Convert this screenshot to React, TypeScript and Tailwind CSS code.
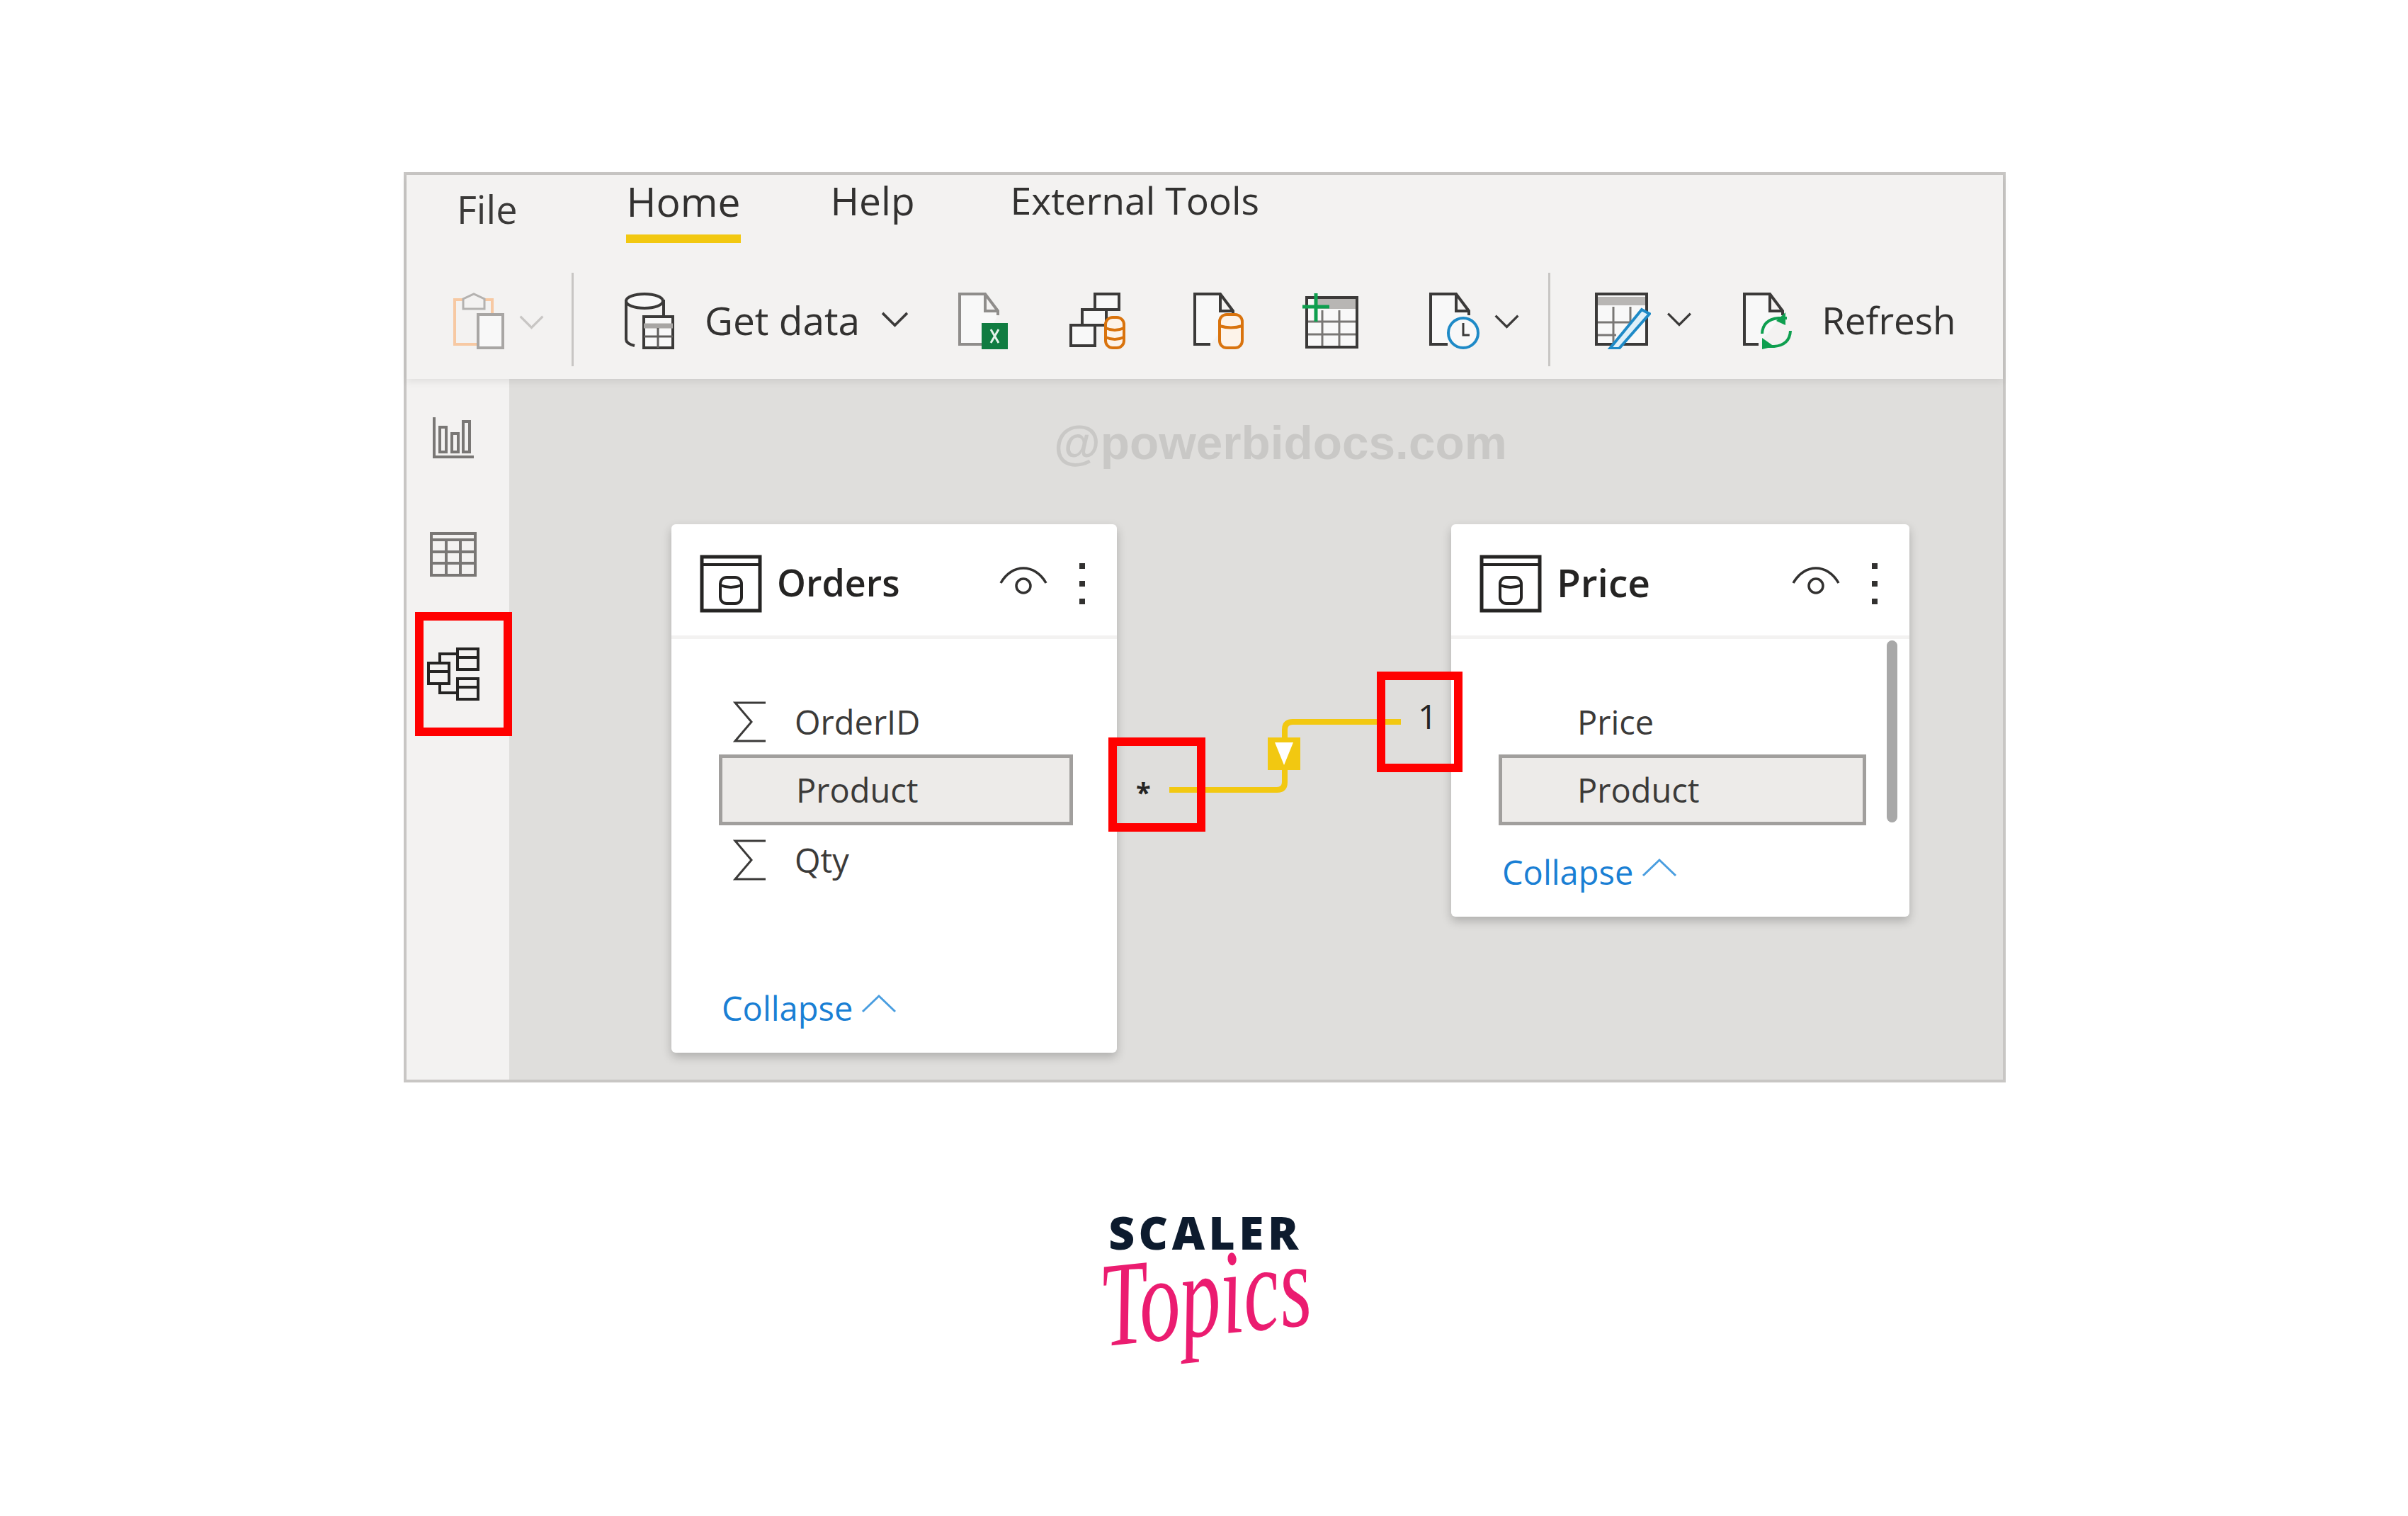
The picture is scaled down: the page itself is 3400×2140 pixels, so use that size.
import React from "react";

const DARK = "#3b3a39";
const ORANGE = "#d9730d";
const BLUE = "#1e8ac7";
const GREEN = "#0e9f4f";

const Chevron = ({ faded = false, className = "" }: { faded?: boolean; className?: string }) => (
  <svg viewBox="0 0 42 24" className={className} fill="none" stroke={faded ? "#c8c6c4" : DARK} strokeWidth="4">
    <path d="M2 2 L21 21 L40 2" />
  </svg>
);

const ClipboardIcon = () => (
  <svg width="72" height="80" viewBox="0 0 72 80" fill="none">
    <path d="M34 73 H2 V10 H55 V30" stroke="#f7c9a3" strokeWidth="4" />
    <path d="M14 23 V9 L29 2 L44 9 V23 Z" stroke="#b4b2b0" strokeWidth="3" fill="#f3f2f1" />
    <rect x="35" y="31" width="35" height="47" stroke="#a8a6a4" strokeWidth="4" fill="#f8f8f8" />
  </svg>
);

const GetDataIcon = () => (
  <svg width="70" height="80" viewBox="0 0 70 80" fill="none" stroke={DARK}>
    <path d="M2 10 V66 Q2 72 14 75 M55 10 V32" strokeWidth="4" />
    <ellipse cx="28" cy="12" rx="26" ry="10" strokeWidth="4" fill="#f8f8f8" />
    <rect x="27" y="34" width="41" height="44" strokeWidth="4" fill="#f8f8f8" />
    <path d="M27 47 H68" stroke="#a8a6a4" strokeWidth="7" />
    <path d="M27 62 H68 M47 50 V78" strokeWidth="3" stroke="#605e5c" />
  </svg>
);

const DocShape = ({ stroke = DARK, bottom = 24 }: { stroke?: string; bottom?: number }) => (
  <path
    d={`M${bottom} 73 H2 V2 H38 L56 26 V32 M38 2 V26 H56`}
    stroke={stroke}
    strokeWidth="4"
    fill="#f8f8f8"
  />
);

const ExcelIcon = () => (
  <svg width="70" height="80" viewBox="0 0 70 80" fill="none">
    <DocShape stroke="#8f8d8b" bottom={34} />
    <rect x="33" y="43" width="37" height="37" fill="#107c41" />
    <path d="M46 52 L57 71 M57 52 L46 71" stroke="#e4f3ea" strokeWidth="3" />
  </svg>
);

const BoxesIcon = () => (
  <svg width="79" height="80" viewBox="0 0 79 80" fill="none">
    <rect x="36" y="2" width="34" height="22" stroke={DARK} strokeWidth="4" fill="#f8f8f8" />
    <rect x="18" y="24" width="34" height="22" stroke={DARK} strokeWidth="4" fill="#f8f8f8" />
    <rect x="2" y="46" width="34" height="29" stroke={DARK} strokeWidth="4" fill="#f8f8f8" />
    <rect x="51" y="35" width="26" height="43" rx="10" stroke={ORANGE} strokeWidth="4" fill="#fdf3e9" />
    <path d="M51 50 Q64 56 77 50 M51 63 Q64 69 77 63" stroke={ORANGE} strokeWidth="4" />
  </svg>
);

const DocCylinderIcon = () => (
  <svg width="71" height="80" viewBox="0 0 71 80" fill="none">
    <DocShape />
    <rect x="37" y="31" width="32" height="47" rx="10" stroke={ORANGE} strokeWidth="4" fill="#fdf3e9" />
    <path d="M37 47 Q53 52 69 47" stroke={ORANGE} strokeWidth="4" />
  </svg>
);

const TablePlusIcon = () => (
  <svg width="79" height="78" viewBox="0 0 79 78" fill="none">
    <rect x="6" y="6" width="71" height="70" stroke={DARK} strokeWidth="4" fill="#f8f8f8" />
    <rect x="20" y="8" width="55" height="14" fill="#b8b6b4" />
    <path d="M8 40 H75 M8 58 H75 M28 24 V74 M52 24 V74" stroke="#797775" strokeWidth="3" />
    <path d="M19 0 V40 M0 19 H38" stroke={GREEN} strokeWidth="5" />
  </svg>
);

const DocClockIcon = () => (
  <svg width="71" height="80" viewBox="0 0 71 80" fill="none">
    <DocShape bottom={26} />
    <ellipse cx="48" cy="57" rx="21" ry="21" stroke={BLUE} strokeWidth="4" fill="#f8f8f8" />
    <path d="M48 43 V60 H57" stroke={DARK} strokeWidth="3" />
  </svg>
);

const TableEditIcon = () => (
  <svg width="79" height="80" viewBox="0 0 79 80" fill="none">
    <rect x="2" y="2" width="71" height="71" stroke={DARK} strokeWidth="4" fill="#f8f8f8" />
    <rect x="4" y="6" width="67" height="12" fill="#b8b6b4" />
    <path d="M4 42 H50 M4 60 H30 M26 20 V72 M50 20 V52" stroke="#797775" strokeWidth="3" />
    <path d="M21 79 L66 24 L77 30 L34 79 Z" stroke={BLUE} strokeWidth="4" fill="#dff0f9" />
  </svg>
);

const RefreshDocIcon = () => (
  <svg width="70" height="80" viewBox="0 0 70 80" fill="none">
    <DocShape bottom={22} />
    <path d="M27 58 Q28 38 50 36 L62 36" stroke={GREEN} strokeWidth="4" />
    <path d="M60 28 V46 L47 40 Z" fill={GREEN} />
    <path d="M67 54 Q66 74 44 76 L32 76" stroke={GREEN} strokeWidth="4" />
    <path d="M27 64 V80 L44 76 Z" fill={GREEN} />
  </svg>
);

const ChartIcon = () => (
  <svg width="58" height="58" viewBox="0 0 58 58" fill="none" stroke="#797775" strokeWidth="4">
    <path d="M2 0 V56 H58" />
    <rect x="10" y="14" width="9" height="35" />
    <rect x="27" y="23" width="9" height="26" />
    <rect x="43" y="6" width="9" height="43" />
  </svg>
);

const GridIcon = () => (
  <svg width="66" height="63" viewBox="0 0 66 63" fill="none" stroke="#797775" strokeWidth="4">
    <rect x="2" y="2" width="62" height="59" />
    <path d="M2 11 H64 M2 28 H64 M2 44 H64 M23 11 V61 M43 11 V61" />
  </svg>
);

const ModelIcon = () => (
  <svg width="74" height="75" viewBox="0 0 74 75" fill="none" stroke="#252423" strokeWidth="4">
    <rect x="2" y="22" width="29" height="29" />
    <path d="M2 34 H31" />
    <rect x="43" y="2" width="29" height="29" />
    <path d="M43 14 H72" />
    <rect x="43" y="44" width="29" height="29" />
    <path d="M43 56 H72" />
    <path d="M18 22 V9 H43 M18 51 V64 H43" />
  </svg>
);

const TableHeadIcon = () => (
  <svg width="88" height="82" viewBox="0 0 88 82" fill="none" stroke="#252423">
    <rect x="3" y="3" width="82" height="76" strokeWidth="5" />
    <path d="M3 14 H85" strokeWidth="4" />
    <rect x="29" y="32" width="30" height="37" rx="9" strokeWidth="4" />
    <path d="M29 43 Q44 49 59 43" strokeWidth="4" />
  </svg>
);

const EyeIcon = () => (
  <svg width="68" height="42" viewBox="0 0 68 42" fill="none" stroke="#323130" strokeWidth="3.5">
    <path d="M2 24 C18 -4 50 -4 66 24" />
    <circle cx="34" cy="28" r="10" />
  </svg>
);

const Dots = () => (
  <div className="flex flex-col gap-[17px]">
    <div className="w-[8px] h-[8px] bg-[#323130]" />
    <div className="w-[8px] h-[8px] bg-[#323130]" />
    <div className="w-[8px] h-[8px] bg-[#323130]" />
  </div>
);

const Sigma = () => (
  <svg width="46" height="58" viewBox="0 0 46 58" fill="none" stroke="#3b3a39" strokeWidth="3">
    <path d="M46 2 H3 L26 29 L3 56 H46" />
  </svg>
);

const Field = ({ name, className = "" }: { name: string; className?: string }) => (
  <div className={`h-[92px] flex items-center ${className}`}>
    <div className="w-[46px] ml-[87px] shrink-0">
      <Sigma />
    </div>
    <span className="ml-[41px] text-[47px] leading-none text-[#3b3a39]">{name}</span>
  </div>
);

const KeyField = ({ boxClass, textClass }: { boxClass: string; textClass: string }) => (
  <div className={`h-[100px] border-[5px] border-[#a19f9d] bg-[#edebe9] flex items-center ${boxClass}`}>
    <span className={`text-[47px] leading-none text-[#3b3a39] ${textClass}`}>Product</span>
  </div>
);

const Collapse = () => (
  <div className="flex items-center text-[#1a7fd4]">
    <span className="text-[47px] leading-none">Collapse</span>
    <svg width="50" height="27" viewBox="0 0 50 27" fill="none" stroke="#4a9ee0" strokeWidth="3" className="ml-[12px] mb-[14px]">
      <path d="M2 25 L25 3 L48 25" />
    </svg>
  </div>
);

const TableCard = ({
  title,
  titleClass,
  className,
  children,
}: {
  title: string;
  titleClass: string;
  className: string;
  children: React.ReactNode;
}) => (
  <div className={`absolute bg-white rounded-[6px] shadow-[0_6px_14px_rgba(0,0,0,0.22)] flex flex-col ${className}`}>
    <div className="h-[162px] shrink-0 border-b-[5px] border-[#f3f2f1] flex items-center pt-[10px] pl-[40px] pr-[45px]">
      <TableHeadIcon />
      <span className={`ml-[21px] mb-[4px] leading-none font-semibold text-[#252423] ${titleClass}`}>{title}</span>
      <div className="ml-auto mr-[45px] mb-[8px]">
        <EyeIcon />
      </div>
      <Dots />
    </div>
    {children}
  </div>
);

export default function App() {
  return (
    <div className="w-[3400px] h-[2140px] bg-white flex flex-col items-center font-['Open_Sans',sans-serif] overflow-hidden">
      <div className="mt-[243px] w-[2262px] h-[1285px] shrink-0 border-4 border-[#c8c6c4] flex flex-col ml-[2px]">
        {/* ribbon */}
        <div className="h-[288px] shrink-0 bg-[#f3f2f1] relative z-10 shadow-[0_4px_10px_rgba(0,0,0,0.08)] flex flex-col">
          <div className="h-[120px] flex items-start leading-none text-[#323130]">
            <span className="ml-[71px] mt-[21px] text-[54px] text-[#3b3a39]">File</span>
            <div className="ml-[154px] mt-[9px] flex flex-col">
              <span className="text-[57px] font-medium">Home</span>
              <div className="mt-[18px] h-[12px] bg-[#f2c811]" />
            </div>
            <span className="ml-[127px] mt-[8px] text-[55px]">Help</span>
            <span className="ml-[135px] mt-[9px] text-[53.5px]">External Tools</span>
          </div>
          <div className="h-[132px] mt-[18px] flex items-center">
            <div className="ml-[66px] flex items-center">
              <div className="mt-[4px]">
                <ClipboardIcon />
              </div>
              <Chevron faded className="w-[39px] h-[20px] ml-[19px] mt-[8px]" />
            </div>
            <div className="ml-[37px] w-[3px] h-[132px] bg-[#c8c6c4]" />
            <div className="ml-[72px] flex items-center">
              <div className="mt-[4px]">
                <GetDataIcon />
              </div>
              <span className="ml-[43px] text-[55px] leading-none text-[#323130]">Get data</span>
              <Chevron className="w-[43px] h-[22px] ml-[28px]" />
            </div>
            <div className="ml-[68px] mt-[4px]">
              <ExcelIcon />
            </div>
            <div className="ml-[87px] mt-[4px]">
              <BoxesIcon />
            </div>
            <div className="ml-[96px] mt-[4px]">
              <DocCylinderIcon />
            </div>
            <div className="ml-[83px] mt-[4px]">
              <TablePlusIcon />
            </div>
            <div className="ml-[100px] flex items-center">
              <div className="mt-[4px]">
                <DocClockIcon />
              </div>
              <Chevron className="w-[41px] h-[20px] ml-[18px] mt-[6px]" />
            </div>
            <div className="ml-[38px] w-[3px] h-[132px] bg-[#c8c6c4]" />
            <div className="ml-[63px] flex items-center">
              <div className="mt-[4px]">
                <TableEditIcon />
              </div>
              <Chevron className="w-[42px] h-[20px] ml-[19px]" />
            </div>
            <div className="ml-[69px] flex items-center">
              <div className="mt-[4px]">
                <RefreshDocIcon />
              </div>
              <span className="ml-[41px] text-[53px] leading-none text-[#323130]">Refresh</span>
            </div>
          </div>
        </div>

        <div className="flex-1 flex min-h-0">
          {/* view rail */}
          <div className="w-[145px] shrink-0 bg-[#f3f2f1] relative flex flex-col">
            <div className="mt-[54px] ml-[37px]">
              <ChartIcon />
            </div>
            <div className="mt-[104px] ml-[33px]">
              <GridIcon />
            </div>
            <div className="mt-[100px] ml-[29px]">
              <ModelIcon />
            </div>
            <div className="absolute z-20 left-[12px] top-[329px] w-[137px] h-[175px] border-[12px] border-[#ff0000]" />
          </div>

          {/* model canvas */}
          <div className="flex-1 relative bg-[#dfdedc]">
            <div className="absolute left-[769px] top-[49px] text-[67.5px] leading-[1.2] font-bold text-[#c9c8c6] font-['Liberation_Sans',sans-serif] whitespace-nowrap">
              @powerbidocs.com
            </div>

            <TableCard title="Orders" titleClass="text-[52px]" className="left-[229px] top-[205px] w-[629px] h-[746px]">
              <div className="pt-[71px] flex-1 flex flex-col">
                <Field name="OrderID" />
                <div className="ml-[67px]">
                  <KeyField boxClass="w-[500px]" textClass="ml-[104px]" />
                </div>
                <Field name="Qty" className="mt-[3px]" />
                <div className="mt-auto ml-[71px] mb-[39px]">
                  <Collapse />
                </div>
              </div>
            </TableCard>

            <TableCard title="Price" titleClass="text-[55px]" className="left-[1330px] top-[205px] w-[647px] h-[554px]">
              <div className="relative pt-[71px] flex-1 flex flex-col">
                <div className="h-[92px] flex items-center pl-[178px]">
                  <span className="text-[47px] leading-none text-[#3b3a39]">Price</span>
                </div>
                <div className="ml-[67px]">
                  <KeyField boxClass="w-[519px]" textClass="ml-[106px]" />
                </div>
                <div className="mt-auto ml-[72px] mb-[39px]">
                  <Collapse />
                </div>
                <div className="absolute right-[17px] top-[2px] w-[15px] h-[257px] rounded-full bg-[#a8a8a8]" />
              </div>
            </TableCard>

            {/* relationship line */}
            <svg className="absolute left-[921px] top-[475px]" width="345" height="115" viewBox="0 0 345 115" fill="none">
              <path d="M11 105 H163 Q174 105 174 94 V20 Q174 9 185 9 H338" stroke="#f2c811" strokeWidth="8" />
              <rect x="150" y="31" width="46" height="46" fill="#f2c811" />
              <path d="M160 38 H186 L173 70 Z" fill="#ffffff" />
            </svg>
            <span className="absolute left-[885px] top-[564px] text-[38px] leading-none font-bold text-[#252423]">*</span>
            <span className="absolute left-[1283px] top-[452px] text-[48px] leading-none font-medium text-[#252423]">1</span>

            <div className="absolute z-20 left-[846px] top-[506px] w-[137px] h-[133px] border-[12px] border-[#ff0000]" />
            <div className="absolute z-20 left-[1225px] top-[413px] w-[121px] h-[142px] border-[12px] border-[#ff0000]" />
          </div>
        </div>
      </div>

      {/* logo */}
      <div className="mt-[180px] flex flex-col items-center ml-[4px]">
        <span className="text-[64px] leading-none font-extrabold tracking-[5.5px] text-[#0d1b2e]">SCALER</span>
        <span className="mt-[14px] text-[170px] leading-[0.5] italic text-[#eb1c70] font-['Liberation_Serif',serif] scale-x-[0.68] -rotate-6">
          Topics
        </span>
      </div>
    </div>
  );
}
